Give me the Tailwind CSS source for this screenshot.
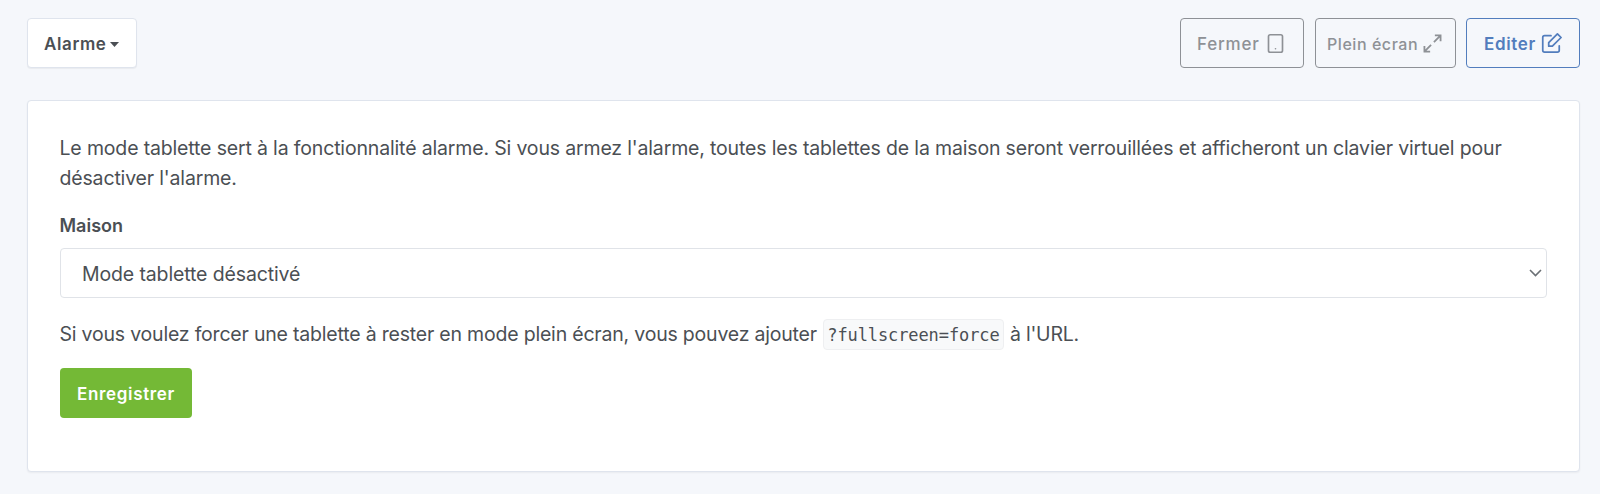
<!DOCTYPE html>
<html lang="fr">
<head>
<meta charset="utf-8">
<title>Mode tablette</title>
<script src="https://cdn.jsdelivr.net/npm/@tailwindcss/browser@4"></script>
</head>
<body class="h-[494px] overflow-hidden bg-[#f5f7fb] pr-5 pl-[26.500px] pt-[18px] font-['Inter',sans-serif] text-[#4b4f54]">
  <header class="flex items-start justify-between">
    <button class="flex h-[50px] w-[110px] items-center rounded-[4px] border border-[#dfe4ed] bg-white pl-[16.500px] text-[17px] font-semibold tracking-[0.600px] shadow-[0_1px_1px_rgba(0,0,0,0.05)]">
      <span class="pt-[3px]">Alarme</span>
      <svg class="mt-0.5 ml-[4px] h-[5px] w-[9px]" viewBox="0 0 9 5" fill="currentColor"><path d="M0 0h9L4.500 5z"/></svg>
    </button>
    <div class="flex">
      <button class="mr-[11px] flex h-[50px] w-[124px] items-center rounded-[4px] border border-[#8e9196] pl-4 text-[17px] font-medium tracking-[0.800px] text-[#8e9196]">
        <span class="pt-[3px]">Fermer</span>
        <svg class="ml-[5px] size-[21px]" viewBox="0 0 24 24" fill="none" stroke="currentColor" stroke-width="1.900" stroke-linecap="round" stroke-linejoin="round"><rect x="4" y="2" width="16" height="20" rx="2"/><path d="M12 18h.01"/></svg>
      </button>
      <button class="mr-2.5 flex h-[50px] w-[141px] items-center rounded-[4px] border border-[#8e9196] pl-[11px] text-[16px] font-medium tracking-[0.550px] text-[#8e9196]">
        <span class="pt-[2px]">Plein écran</span>
        <svg class="ml-[5px] size-[19px]" viewBox="0 0 20 20" fill="none" stroke="currentColor" stroke-width="1.900"><path d="M11.500 8.500 18 2M12.500 1.500h6v6M8.500 11.500 2 18M1.500 12.500v6h6"/></svg>
      </button>
      <button class="flex h-[50px] w-[114px] items-center rounded-[4px] border border-[#527dbd] pl-[17px] text-[17px] font-semibold tracking-[0.650px] text-[#527dbd]">
        <span class="pt-[3px]">Editer</span>
        <svg class="ml-[4px] size-[22px] shrink-0" viewBox="0 0 24 24" fill="none" stroke="currentColor" stroke-width="1.900" stroke-linecap="round" stroke-linejoin="round"><path d="M12 4H5a2 2 0 0 0-2 2v14a2 2 0 0 0 2 2h14a2 2 0 0 0 2-2v-5"/><path d="M19 2 23 6 13.500 15.500H9.500V11.500z"/></svg>
      </button>
    </div>
  </header>
  <main class="mt-8 h-[372px] rounded-[4px] border border-[#dfe4ed] bg-white px-8 pt-[32px] shadow-[0_1px_2px_rgba(0,0,0,0.05)]">
    <p class="text-[19.500px] leading-[30px] tracking-[-0.160px] whitespace-nowrap"><span>Le mode tablette sert à la fonctionnalité alarme. Si vous armez l'alarme, toutes les tablettes de la maison seront verrouillées et afficheront un clavier virtuel pour</span><br>désactiver l'alarme.</p>
    <div class="mt-[20px] text-[18px] leading-[26px] font-semibold">Maison</div>
    <div class="mt-[9px] flex h-[50px] items-center justify-between rounded-[4px] border border-[#e0e3e8] pr-1 pl-[21.500px] text-[19.500px] tracking-[-0.130px]">
      <span class="pt-[3px]">Mode tablette désactivé</span>
      <svg class="h-[8px] w-[13px]" viewBox="0 0 13 8" fill="none" stroke="#6b7075" stroke-width="1.600"><path d="M1 1l5.500 5.500L12 1"/></svg>
    </div>
    <p class="mt-[21px] flex h-[31px] items-center text-[19.500px] tracking-[-0.200px]"><span>Si vous voulez forcer une tablette à rester en mode plein écran, vous pouvez ajouter</span><code class="ml-[6px] flex h-[31px] w-[181px] items-center justify-center rounded-[4px] border border-[#eeeff1] bg-[#f8f9fa] pt-0.5 font-['DejaVu_Sans_Mono',monospace] text-[17px] tracking-[-0.100px]">?fullscreen=force</code><span class="ml-[6px]">à l'URL.</span></p>
    <button class="mt-[18px] flex h-[50px] w-[132px] items-center justify-center rounded-[4px] bg-[#74b936] text-[17px] font-semibold tracking-[0.650px] text-white"><span class="pt-[3px] pl-px">Enregistrer</span></button>
  </main>
</body>
</html>
